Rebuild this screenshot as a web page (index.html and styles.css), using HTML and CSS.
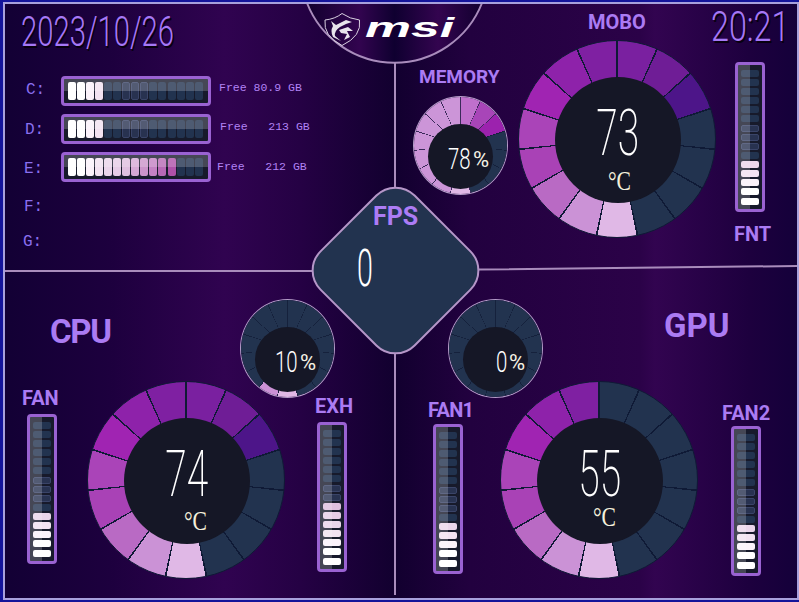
FILE: index.html
```html
<!DOCTYPE html>
<html lang="en">
<head>
<meta charset="utf-8">
<title>MSI sensor panel</title>
<link rel="stylesheet" href="styles.css">
</head>
<body>
<main class="screen">
  <svg class="lines" width="799" height="602" viewBox="0 0 799 602" aria-hidden="true">
    <defs>
      <linearGradient id="logoBg" x1="0" x2="1" y1="0" y2="0">
        <stop offset="0" stop-color="#12002f"/>
        <stop offset=".3" stop-color="#32044f"/>
        <stop offset=".5" stop-color="#0f0030"/>
        <stop offset=".75" stop-color="#33044f"/>
        <stop offset="1" stop-color="#12002f"/>
      </linearGradient>
    </defs>
    <path class="line" d="M395 60V190M395 352V595M5 271L312 271M478 269.5L797 266"/>
    <path class="arc" d="M307 3A94 94 0 0 0 482 3"/>
  </svg>

  <div class="logo">
    <svg class="shield" width="40" height="36" viewBox="321 12 40 36" aria-hidden="true">
      <path class="shield-line" d="M324 20Q334 19 341 13.5Q349 19 358.500 20Q361 36 341 45.500Q322 36 324 20Z"/>
      <path class="dragon" d="M330 21L335 25L345 20L351 22L345 24L339 27Q333 31 334 36L340 41L332 37Q329 31 332 26ZM338 30L347 27L352 31L346 31L349 37L343 40L346 34L340 33Z"/>
    </svg>
    <span class="msi">msi</span>
  </div>

  <div class="clock date">2023/10/26</div>
  <div class="clock time">20:21</div>

  <span class="drive-letter dl-c">C:</span>
  <span class="drive-letter dl-d">D:</span>
  <span class="drive-letter dl-e">E:</span>
  <span class="drive-letter dl-f">F:</span>
  <span class="drive-letter dl-g">G:</span>

  <div class="bar horizontal hb-c"><i class="seg lit c1"></i><i class="seg lit c1"></i><i class="seg lit c3"></i><i class="seg lit c4"></i><i class="seg"></i><i class="seg"></i><i class="seg"></i><i class="seg"></i><i class="seg"></i><i class="seg"></i><i class="seg"></i><i class="seg"></i><i class="seg"></i><i class="seg"></i><i class="seg"></i></div>
  <div class="bar horizontal hb-d"><i class="seg lit c1"></i><i class="seg lit c1"></i><i class="seg lit c3"></i><i class="seg lit c4"></i><i class="seg"></i><i class="seg"></i><i class="seg"></i><i class="seg"></i><i class="seg"></i><i class="seg"></i><i class="seg"></i><i class="seg"></i><i class="seg"></i><i class="seg"></i><i class="seg"></i></div>
  <div class="bar horizontal hb-e"><i class="seg lit c1"></i><i class="seg lit c1"></i><i class="seg lit c3"></i><i class="seg lit c4"></i><i class="seg lit c5"></i><i class="seg lit c6"></i><i class="seg lit c7"></i><i class="seg lit c8"></i><i class="seg lit c9"></i><i class="seg lit c10"></i><i class="seg lit c11"></i><i class="seg lit c12"></i><i class="seg"></i><i class="seg"></i><i class="seg"></i></div>

  <span class="free fr-c">Free 80.9 GB</span>
  <span class="free fr-d">Free   213 GB</span>
  <span class="free fr-e">Free   212 GB</span>

  <span class="label l-mobo">MOBO</span>
  <span class="label l-memory">MEMORY</span>
  <span class="label l-fnt">FNT</span>
  <span class="label l-fan">FAN</span>
  <span class="label l-exh">EXH</span>
  <span class="label l-fan1">FAN1</span>
  <span class="label l-fan2">FAN2</span>
  <span class="label title l-cpu">CPU</span>
  <span class="label title l-gpu">GPU</span>

  <div class="gauge big g-mobo ring-full">
    <div class="hole"><span class="big-num">73</span><span class="unit u-mobo">°C</span></div>
  </div>
  <div class="gauge big g-cpu ring-full">
    <div class="hole"><span class="big-num">74</span><span class="unit u-cpu">°C</span></div>
  </div>
  <div class="gauge big g-gpu ring-gpu">
    <div class="hole"><span class="big-num">55</span><span class="unit u-gpu">°C</span></div>
  </div>

  <div class="dial d-mem ring-mem">
    <div class="dial-hole"><span class="dial-digits">78</span><span class="pct">%</span></div>
  </div>
  <div class="dial d-cpu ring-low">
    <div class="dial-hole"><span class="dial-digits">10</span><span class="pct">%</span></div>
  </div>
  <div class="dial d-gpu ring-zero">
    <div class="dial-hole end"><span class="dial-digits one">0</span><span class="pct">%</span></div>
  </div>

  <div class="fps">
    <span class="fps-title">FPS</span>
    <span class="fps-value">0</span>
  </div>

  <div class="bar vertical vb-fnt"><i class="seg lit c1"></i><i class="seg lit c1"></i><i class="seg lit c3"></i><i class="seg lit c4"></i><i class="seg lit c5"></i><i class="seg"></i><i class="seg"></i><i class="seg"></i><i class="seg"></i><i class="seg"></i><i class="seg"></i><i class="seg"></i><i class="seg"></i><i class="seg"></i><i class="seg"></i></div>
  <div class="bar vertical vb-fan"><i class="seg lit c1"></i><i class="seg lit c1"></i><i class="seg lit c3"></i><i class="seg lit c4"></i><i class="seg lit c5"></i><i class="seg"></i><i class="seg"></i><i class="seg"></i><i class="seg"></i><i class="seg"></i><i class="seg"></i><i class="seg"></i><i class="seg"></i><i class="seg"></i><i class="seg"></i></div>
  <div class="bar vertical vb-exh"><i class="seg lit c1"></i><i class="seg lit c1"></i><i class="seg lit c3"></i><i class="seg lit c4"></i><i class="seg lit c5"></i><i class="seg lit c6"></i><i class="seg lit c7"></i><i class="seg"></i><i class="seg"></i><i class="seg"></i><i class="seg"></i><i class="seg"></i><i class="seg"></i><i class="seg"></i><i class="seg"></i></div>
  <div class="bar vertical vb-fan1"><i class="seg lit c1"></i><i class="seg lit c1"></i><i class="seg lit c3"></i><i class="seg lit c4"></i><i class="seg lit c5"></i><i class="seg"></i><i class="seg"></i><i class="seg"></i><i class="seg"></i><i class="seg"></i><i class="seg"></i><i class="seg"></i><i class="seg"></i><i class="seg"></i><i class="seg"></i></div>
  <div class="bar vertical vb-fan2"><i class="seg lit c1"></i><i class="seg lit c1"></i><i class="seg lit c3"></i><i class="seg lit c4"></i><i class="seg lit c5"></i><i class="seg"></i><i class="seg"></i><i class="seg"></i><i class="seg"></i><i class="seg"></i><i class="seg"></i><i class="seg"></i><i class="seg"></i><i class="seg"></i><i class="seg"></i></div>

  <div class="frame"></div>
</main>
</body>
</html>
```

FILE: styles.css
```css
*, *::before, *::after { box-sizing: border-box; }
html, body { margin: 0; padding: 0; background: #14003a; }
.screen {
  position: relative;
  width: 799px;
  height: 602px;
  overflow: hidden;
  font-family: Roboto, "Liberation Sans", sans-serif;
  background: linear-gradient(90deg, #120034 0, #1d003e 110px, #300350 225px, #250144 300px, #12002f 395px, #22013f 470px, #2b0248 640px, #320450 655px, #1d003e 750px, #14003a 799px);
  --ln: #0f1a36;
  --a: #7a20a0; --b: #6f1d96; --c: #4d1589; --n: #22334f;
  --l1: #e0b8e6; --l2: #cb92d6; --l3: #b96ac4; --l4: #a942b6; --l5: #aa44b8; --l6: #a024b2; --l7: #8e22aa;
}

/* Frame */
.frame {
  position: absolute;
  inset: 0;
  border-style: solid;
  border-color: #14149a;
  border-width: 2px 0 2px 3px;
  pointer-events: none;
}
.frame::after {
  content: "";
  position: absolute;
  inset: 0;
  border: 2px solid #a8a0dc;
}

/* Dividers and logo */
.lines { position: absolute; left: 0; top: 0; }
.line { fill: none; stroke: #a98cbc; stroke-width: 2; }
.arc { fill: url(#logoBg); stroke: #a98cbc; stroke-width: 2; }
.logo {
  position: absolute;
  left: 322px;
  top: 12px;
  width: 140px;
  height: 36px;
  display: flex;
  align-items: center;
}
.shield { flex: none; }
.shield-line { fill: none; stroke: #d8cfe0; stroke-width: 1; }
.dragon { fill: #e8e4ec; }
.msi {
  font-family: "Liberation Sans", sans-serif;
  font-weight: 700;
  font-style: italic;
  font-size: 28px;
  line-height: 30px;
  color: #fff;
  margin: -4px 0 0 3px;
  transform: scaleX(1.85);
  transform-origin: left center;
}

/* Clock */
.clock {
  position: absolute;
  color: #a678f6;
  font-weight: 350;
  text-shadow: 2px 2px 0 #07000f;
  white-space: nowrap;
  transform-origin: left top;
}
.date { left: 21px; top: 6px; font-size: 43px; line-height: 50px; transform: scaleX(.68); }
.time { left: 711px; top: 1px; font-size: 43px; line-height: 50px; font-weight: 300; transform: scaleX(.75); }

/* Drives */
.drive-letter {
  position: absolute;
  font-family: "Liberation Mono", monospace;
  font-size: 16px;
  line-height: 18px;
  color: #8a6ff0;
}
.dl-c { left: 26px; top: 81px; }
.dl-d { left: 25px; top: 121px; }
.dl-e { left: 24px; top: 160px; }
.dl-f { left: 24px; top: 198px; }
.dl-g { left: 23px; top: 233px; }
.free {
  position: absolute;
  font-family: "Liberation Mono", monospace;
  font-size: 11.500px;
  line-height: 14px;
  color: #b283f5;
  white-space: pre;
}
.fr-c { left: 219px; top: 81px; }
.fr-d { left: 220px; top: 120px; }
.fr-e { left: 217px; top: 160px; }

/* Segment bars */
.bar {
  position: absolute;
  display: flex;
  border: 3px solid #9a62d2;
  border-radius: 4px;
  background: #171a2b;
  overflow: hidden;
}
.bar::after {
  content: "";
  position: absolute;
  background: rgba(255, 255, 255, .2);
}
.horizontal {
  width: 150px;
  height: 30px;
  padding: 3px 3.500px;
  gap: 1.100px;
}
.horizontal::after { left: 0; right: 0; top: 0; height: 12px; }
.horizontal .seg { width: 8px; height: 18px; }
.vertical {
  width: 30px;
  height: 150px;
  padding: 4px 3px 4.500px;
  flex-direction: column-reverse;
  gap: 2.130px;
}
.vertical::after { left: 0; top: 0; bottom: 0; width: 12px; }
.vertical .seg { width: 18px; height: 7px; }
.seg { display: block; flex: none; border-radius: 2px; background: var(--n); }
.seg:not(.lit):nth-child(n+7):nth-child(-n+9) { background: #283250; border: 1px solid #3a4468; }
.lit { background: var(--c0); }
.c1 { --c0: #fff; }
.c3 { --c0: #fbf2fa; }
.c4 { --c0: #f2e2f1; }
.c5 { --c0: #ead5ea; }
.c6 { --c0: #e6cce6; }
.c7 { --c0: #dfbfdf; }
.c8 { --c0: #d5a9d5; }
.c9 { --c0: #cb94ca; }
.c10 { --c0: #c381c3; }
.c11 { --c0: #b768b5; }
.c12 { --c0: #ae51a9; }
.hb-c { left: 61px; top: 76px; }
.hb-d { left: 61px; top: 114px; }
.hb-e { left: 61px; top: 152px; }
.vb-fnt { left: 735px; top: 62px; }
.vb-fan { left: 27px; top: 414px; }
.vb-exh { left: 317px; top: 422px; }
.vb-fan1 { left: 433px; top: 424px; }
.vb-fan2 { left: 731px; top: 426px; }

/* Labels */
.label {
  position: absolute;
  font-weight: 700;
  font-size: 20px;
  line-height: 20px;
  color: #ab7bf3;
  white-space: nowrap;
}
.title { font-size: 33px; line-height: 34px; }
.l-mobo { left: 588px; top: 12px; }
.l-memory { left: 419px; top: 67px; font-size: 19px; }
.l-fnt { left: 734px; top: 224px; }
.l-fan { left: 22px; top: 388px; }
.l-exh { left: 315px; top: 396px; }
.l-fan1 { left: 428px; top: 400px; letter-spacing: -.7px; }
.l-fan2 { left: 722px; top: 403px; }
.l-cpu { left: 50px; top: 315px; letter-spacing: -1.300px; }
.l-gpu { left: 664px; top: 309px; }

/* Ring gauges */
.gauge, .dial { position: absolute; border-radius: 50%; }
.big { width: 198px; height: 198px; padding: 36px; border: 1px solid var(--ln); }
.g-mobo { left: 518px; top: 40px; }
.g-cpu { left: 87px; top: 381px; }
.g-gpu { left: 500px; top: 381px; }
.ring-full {
  background: conic-gradient(
    var(--ln) 0 .5deg, var(--a) .5deg 23.500deg,
    var(--ln) 23.500deg 24.500deg, var(--b) 24.500deg 47.500deg,
    var(--ln) 47.500deg 48.500deg, var(--c) 48.500deg 71.500deg,
    var(--ln) 71.500deg 72.500deg, var(--n) 72.500deg 95.500deg,
    var(--ln) 95.500deg 96.500deg, var(--n) 96.500deg 119.500deg,
    var(--ln) 119.500deg 120.500deg, var(--n) 120.500deg 143.500deg,
    var(--ln) 143.500deg 144.500deg, var(--n) 144.500deg 167.500deg,
    var(--ln) 167.500deg 168.500deg, var(--l1) 168.500deg 191.500deg,
    var(--ln) 191.500deg 192.500deg, var(--l2) 192.500deg 215.500deg,
    var(--ln) 215.500deg 216.500deg, var(--l3) 216.500deg 239.500deg,
    var(--ln) 239.500deg 240.500deg, var(--l4) 240.500deg 263.500deg,
    var(--ln) 263.500deg 264.500deg, var(--l5) 264.500deg 287.500deg,
    var(--ln) 287.500deg 288.500deg, var(--l6) 288.500deg 311.500deg,
    var(--ln) 311.500deg 312.500deg, var(--l7) 312.500deg 335.500deg,
    var(--ln) 335.500deg 336.500deg, #7f20a2 336.500deg 359.500deg,
    var(--ln) 359.500deg 360deg);
}
.ring-gpu {
  background: conic-gradient(
    var(--ln) 0 .5deg, var(--n) .5deg 23.500deg,
    var(--ln) 23.500deg 24.500deg, var(--n) 24.500deg 47.500deg,
    var(--ln) 47.500deg 48.500deg, var(--n) 48.500deg 71.500deg,
    var(--ln) 71.500deg 72.500deg, var(--n) 72.500deg 95.500deg,
    var(--ln) 95.500deg 96.500deg, var(--n) 96.500deg 119.500deg,
    var(--ln) 119.500deg 120.500deg, var(--n) 120.500deg 143.500deg,
    var(--ln) 143.500deg 144.500deg, var(--n) 144.500deg 167.500deg,
    var(--ln) 167.500deg 168.500deg, var(--l1) 168.500deg 191.500deg,
    var(--ln) 191.500deg 192.500deg, var(--l2) 192.500deg 215.500deg,
    var(--ln) 215.500deg 216.500deg, var(--l3) 216.500deg 239.500deg,
    var(--ln) 239.500deg 240.500deg, var(--l4) 240.500deg 263.500deg,
    var(--ln) 263.500deg 264.500deg, var(--l5) 264.500deg 287.500deg,
    var(--ln) 287.500deg 288.500deg, var(--l6) 288.500deg 311.500deg,
    var(--ln) 311.500deg 312.500deg, var(--l7) 312.500deg 335.500deg,
    var(--ln) 335.500deg 336.500deg, #7f20a2 336.500deg 359.500deg,
    var(--ln) 359.500deg 360deg);
}
.hole {
  width: 126px;
  height: 126px;
  border-radius: 50%;
  background: #151726;
  display: flex;
  flex-direction: column;
  align-items: center;
  padding-top: 33px;
}
.big-num {
  font-weight: 200;
  font-size: 65px;
  line-height: 46px;
  color: #fff;
  transform: scaleX(.6);
  white-space: nowrap;
}
.unit {
  font-family: "Liberation Serif", serif;
  font-size: 27px;
  line-height: 24px;
  color: #f4f0dc;
  transform: scaleX(.8);
  white-space: nowrap;
}
.u-mobo { margin: 13px 0 0 2px; }
.u-cpu { margin: 12px 0 0 16px; }
.u-gpu { margin: 8px 0 0 9px; }

/* Small dials */
.dial {
  width: 93px;
  height: 97px;
  padding: 0;
  box-shadow: 0 0 0 1px #b49cc8;
  display: flex;
  justify-content: center;
}
.d-mem { left: 414px; top: 97px; }
.d-cpu { left: 241px; top: 300px; }
.d-gpu { left: 449px; top: 300px; }
.ring-low, .ring-zero, .ring-mem { --k: #15213c; --p: #cc95d8; }
.ring-zero {
  background: conic-gradient(
    var(--k) 0 .5deg, var(--n) .5deg 23.500deg, var(--k) 23.500deg 24.500deg,
    var(--n) 24.500deg 47.500deg, var(--k) 47.500deg 48.500deg,
    var(--n) 48.500deg 71.500deg, var(--k) 71.500deg 72.500deg,
    var(--n) 72.500deg 95.500deg, var(--k) 95.500deg 96.500deg,
    var(--n) 96.500deg 119.500deg, var(--k) 119.500deg 120.500deg,
    var(--n) 120.500deg 143.500deg, var(--k) 143.500deg 144.500deg,
    var(--n) 144.500deg 167.500deg, var(--k) 167.500deg 168.500deg,
    var(--n) 168.500deg 191.500deg, var(--k) 191.500deg 192.500deg,
    var(--n) 192.500deg 215.500deg, var(--k) 215.500deg 216.500deg,
    var(--n) 216.500deg 239.500deg, var(--k) 239.500deg 240.500deg,
    var(--n) 240.500deg 263.500deg, var(--k) 263.500deg 264.500deg,
    var(--n) 264.500deg 287.500deg, var(--k) 287.500deg 288.500deg,
    var(--n) 288.500deg 311.500deg, var(--k) 311.500deg 312.500deg,
    var(--n) 312.500deg 335.500deg, var(--k) 335.500deg 336.500deg,
    var(--n) 336.500deg 359.500deg, var(--k) 359.500deg 360deg);
}
.ring-low {
  background: conic-gradient(
    var(--k) 0 .5deg, var(--n) .5deg 23.500deg, var(--k) 23.500deg 24.500deg,
    var(--n) 24.500deg 47.500deg, var(--k) 47.500deg 48.500deg,
    var(--n) 48.500deg 71.500deg, var(--k) 71.500deg 72.500deg,
    var(--n) 72.500deg 95.500deg, var(--k) 95.500deg 96.500deg,
    var(--n) 96.500deg 119.500deg, var(--k) 119.500deg 120.500deg,
    var(--n) 120.500deg 143.500deg, var(--k) 143.500deg 144.500deg,
    var(--n) 144.500deg 167.500deg, var(--k) 167.500deg 168.500deg,
    #e0b8e6 168.500deg 191.500deg, var(--k) 191.500deg 192.500deg,
    #cb92d6 192.500deg 215.500deg, var(--k) 215.500deg 216.500deg,
    var(--n) 216.500deg 239.500deg, var(--k) 239.500deg 240.500deg,
    var(--n) 240.500deg 263.500deg, var(--k) 263.500deg 264.500deg,
    var(--n) 264.500deg 287.500deg, var(--k) 287.500deg 288.500deg,
    var(--n) 288.500deg 311.500deg, var(--k) 311.500deg 312.500deg,
    var(--n) 312.500deg 335.500deg, var(--k) 335.500deg 336.500deg,
    var(--n) 336.500deg 359.500deg, var(--k) 359.500deg 360deg);
}
.ring-mem {
  --k: #3a2a5a;
  background: conic-gradient(
    var(--k) 0 .5deg, #bf70cc .5deg 23.500deg, var(--k) 23.500deg 24.500deg,
    #a845b8 24.500deg 47.500deg, var(--k) 47.500deg 48.500deg,
    #9c22ae 48.500deg 71.500deg, #15213c 71.500deg 72.500deg,
    var(--n) 72.500deg 95.500deg, #15213c 95.500deg 96.500deg,
    var(--n) 96.500deg 119.500deg, #15213c 119.500deg 120.500deg,
    var(--n) 120.500deg 143.500deg, #15213c 143.500deg 144.500deg,
    var(--n) 144.500deg 167.500deg, var(--k) 167.500deg 168.500deg,
    #e0b8e6 168.500deg 191.500deg, var(--k) 191.500deg 192.500deg,
    var(--p) 192.500deg 215.500deg, var(--k) 215.500deg 216.500deg,
    var(--p) 216.500deg 239.500deg, var(--k) 239.500deg 240.500deg,
    var(--p) 240.500deg 263.500deg, var(--k) 263.500deg 264.500deg,
    var(--p) 264.500deg 287.500deg, var(--k) 287.500deg 288.500deg,
    var(--p) 288.500deg 311.500deg, var(--k) 311.500deg 312.500deg,
    var(--p) 312.500deg 335.500deg, var(--k) 335.500deg 336.500deg,
    var(--p) 336.500deg 359.500deg, var(--k) 359.500deg 360deg);
}
.dial-hole {
  width: 65px;
  height: 65px;
  margin-top: 27px;
  border-radius: 50%;
  background: #151726;
  display: flex;
  align-items: flex-start;
  padding: 24px 0 0 20px;
}
.dial-hole.end { padding-left: 33px; }
.dial-digits {
  font-weight: 300;
  font-size: 30px;
  line-height: 22px;
  width: 25px;
  color: #fff;
  transform: scaleX(.68);
  transform-origin: left top;
  white-space: nowrap;
}
.dial-digits.one { width: 13px; }
.pct {
  font-weight: 400;
  font-size: 22px;
  line-height: 24px;
  color: #f6f2e4;
}

/* FPS diamond */
.fps {
  position: absolute;
  left: 311px;
  top: 186px;
  width: 168px;
  height: 168px;
  display: flex;
  flex-direction: column;
  align-items: flex-start;
}
.fps::before {
  content: "";
  position: absolute;
  left: 16.500px;
  top: 16.500px;
  width: 135px;
  height: 135px;
  border: 2px solid #b596c8;
  border-radius: 28px;
  background: #22334f;
  transform: rotate(45deg);
}
.fps-title {
  position: relative;
  margin: 18px 0 0 62px;
  font-weight: 700;
  font-size: 25px;
  line-height: 26px;
  color: #ac7cf5;
}
.fps-value {
  position: relative;
  margin: 20px 0 0 46px;
  font-weight: 300;
  font-size: 52px;
  line-height: 37px;
  color: #fff;
  transform: scaleX(.55);
  transform-origin: left top;
}
```
